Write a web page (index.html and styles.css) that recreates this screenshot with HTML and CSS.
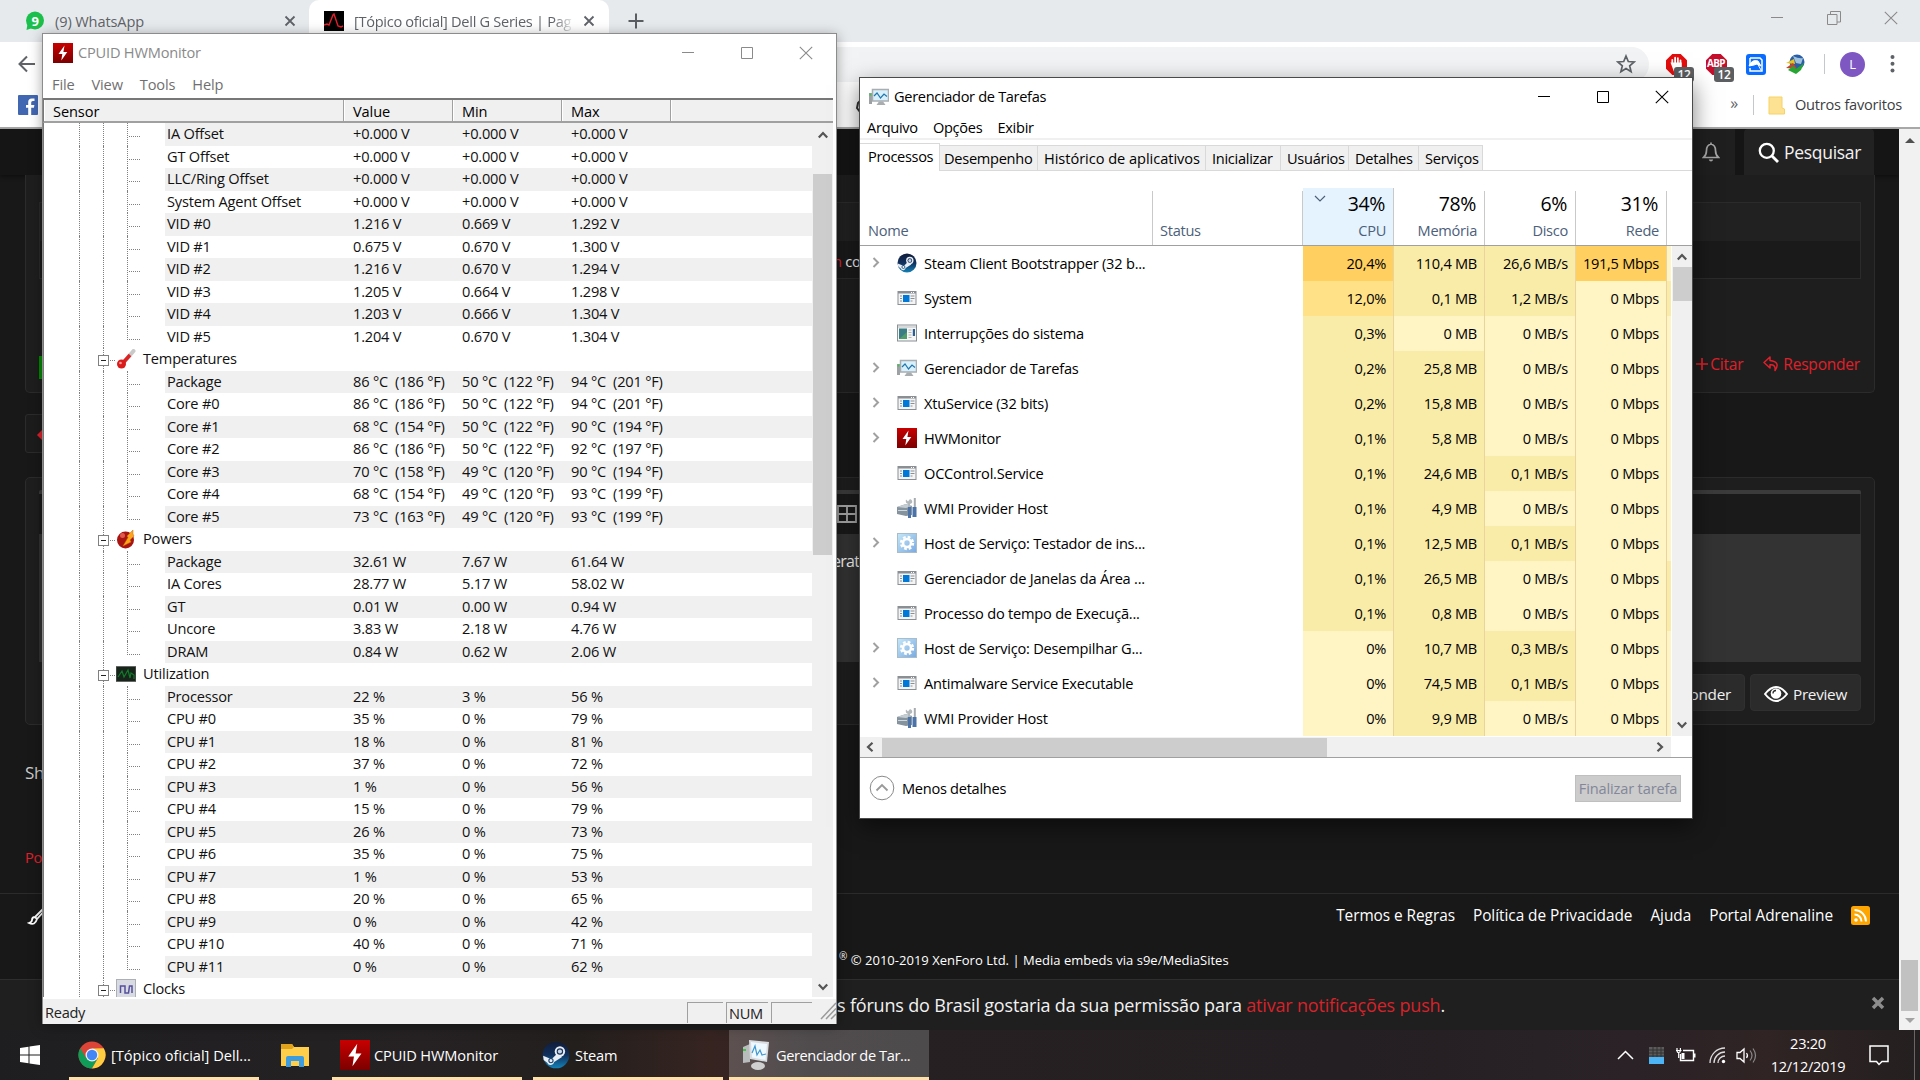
FILE: index.html
```html
<!DOCTYPE html>
<html lang="pt-BR">

<head>
  <meta charset="UTF-8">
  <meta name="viewport" content="width=device-width, initial-scale=1.0">
  <title>Desktop</title>
  <link rel="stylesheet" href="styles.css">
</head>

<body>

  <!-- shared icons -->
  <svg class="defs" width="0" height="0">
    <defs>
      <linearGradient id="redGrad" x1="0" y1="0" x2="0" y2="1"><stop offset="0" stop-color="#c80000"/><stop offset="1" stop-color="#7c0000"/></linearGradient>
      <linearGradient id="steamGrad" x1="0" y1="0" x2="0" y2="1"><stop offset="0" stop-color="#111d3a"/><stop offset=".5" stop-color="#10305c"/><stop offset="1" stop-color="#1483b8"/></linearGradient>
      <linearGradient id="gearGrad" x1="0" y1="0" x2="1" y2="1"><stop offset="0" stop-color="#c5e8f8"/><stop offset="1" stop-color="#79a9e0"/></linearGradient>
    </defs>
    <symbol id="i-bolt" viewBox="0 0 20 20"><rect width="20" height="20" fill="url(#redGrad)"/><path d="M11.5 2.5L5.5 11h3.8l-1 6.5 6-8.5h-3.9z" fill="#fff"/></symbol>
    <symbol id="i-steam" viewBox="0 0 20 20"><circle cx="10" cy="10" r="9.5" fill="url(#steamGrad)"/><path d="M.8 10.5l6 2.6 4.5-4.6 3 3-5.6 3.5a2.6 2.6 0 0 1-5 .5L1.2 13.5z" fill="#e9eef5"/><circle cx="12.8" cy="7.5" r="3.7" fill="#e9eef5"/><circle cx="12.8" cy="7.5" r="2.3" fill="#163057"/><circle cx="12.8" cy="7.5" r="1.5" fill="#c9d6e6"/><circle cx="6.4" cy="14" r="1.5" fill="none" stroke="#1a4570" stroke-width=".8"/></symbol>
    <symbol id="i-app" viewBox="0 0 20 20"><rect x="1" y="3.5" width="18" height="13" fill="#f4f4f4" stroke="#8a8f94"/><path d="M1 4.5h18" stroke="#8a8f94" stroke-width="2"/><path d="M14 4.5h1M16 4.5h1" stroke="#fff"/><rect x="6" y="7" width="6.500" height="7" fill="#0078d7"/><path d="M3 8h2M3 10.500h2M3 13h2M13.500 8h4M13.500 10.500h4M13.500 13h2" stroke="#8a8f94"/></symbol>
    <symbol id="i-sys" viewBox="0 0 20 20"><rect x=".5" y="2" width="19" height="16" fill="#f6f6f6" stroke="#8a8f94"/><path d="M1 4h18" stroke="#b9bdc1"/><rect x="2" y="5.500" width="8" height="10.500" fill="#3a7d84"/><path d="M2 16l8-7v7z" fill="#4f9c6c"/><path d="M11.500 7h3M11.500 9.500h3M11.500 12h3M11.500 14.500h3" stroke="#b5b5b5"/><rect x="15.800" y="6" width="2.200" height="7" fill="#2b5f93"/></symbol>
    <symbol id="i-tm" viewBox="0 0 20 20"><rect y="6" width="3" height="11" fill="#9da1a4"/><path d="M.5 7.500h2" stroke="#3fc34a" stroke-width="2"/><rect x="3.500" y="2.500" width="16" height="11.500" fill="#d8f0fb" stroke="#a9adb0" stroke-width="1.500"/><path d="M5 9l3-3 3.500 5L15 7l3 2.500" fill="none" stroke="#2176ae" stroke-width="1.200"/><path d="M10 14.500h4l2.500 3.500H7.500z" fill="#a9adb0"/></symbol>
    <symbol id="i-wmi" viewBox="0 0 20 20"><path d="M0 9l9-3 6 2v9l-6 1-9-2z" fill="#84939d"/><path d="M0 9l9-3 6 2-6 2z" fill="#c4cdd2"/><path d="M1 12.500h9" stroke="#cfd8dc"/><path d="M9 1.500l2 2 2-2.500q3 1 2 4l-2 1v3h-2V6q-3-1-2-4.500z" fill="#b3b8ba"/><path d="M17.800 0v10" stroke="#a6abad" stroke-width="2"/><path d="M11 9h3v11h-3zM15.500 9h4v10h-4z" fill="#4c73a8"/></symbol>
    <symbol id="i-gear" viewBox="0 0 20 20"><rect x=".5" y=".5" width="19" height="19" fill="url(#gearGrad)" stroke="#a9bccb"/><circle cx="10" cy="10" r="6" fill="none" stroke="#fff" stroke-width="2.400" stroke-dasharray="2.700 2"/><circle cx="10" cy="10" r="4" fill="none" stroke="#fff" stroke-width="2.600"/></symbol>
    <symbol id="i-temp" viewBox="0 0 20 20"><path d="M17.500 2L8 13" stroke="#c9c9c9" stroke-width="4" stroke-linecap="round"/><path d="M14 6l-8 9" stroke="#dc2222" stroke-width="3.500"/><circle cx="5.500" cy="15" r="4.500" fill="#d91c1c"/><circle cx="4.500" cy="14" r="1.300" fill="#ff9b9b"/></symbol>
    <symbol id="i-power" viewBox="0 0 20 20"><ellipse cx="9.500" cy="11" rx="8.500" ry="8.500" fill="#a81412"/><circle cx="6.500" cy="6.500" r="2.500" fill="#e0574c"/><path d="M17 1l-6 6 1 1.500L7 17l8-4-1-2 4-4-1-2z" fill="#ffa51c" stroke="#c46f00" stroke-width=".5"/></symbol>
    <symbol id="i-util" viewBox="0 0 20 20"><rect y="2.500" width="20" height="15" fill="#16241a" stroke="#666"/><path d="M2 13l4-6 2 6 4-7 2 8 1-5 3 2v4" fill="none" stroke="#127a2a" stroke-width="1.200"/></symbol>
    <symbol id="i-clock" viewBox="0 0 20 20"><rect x=".5" y=".5" width="19" height="19" fill="#d9dbe2" stroke="#adafb7"/><path d="M4.500 14V7H9v7h3.500l1-7H16v7" fill="none" stroke="#54509e" stroke-width="1.500"/></symbol>
    <symbol id="i-close" viewBox="0 0 14 14"><path d="M.8.800l12.400 12.400M13.200.800L.800 13.200" stroke="currentColor" stroke-width="1.100"/></symbol>
    <symbol id="i-max" viewBox="0 0 14 14"><path d="M1.500 1.500h11v11h-11z" fill="none" stroke="currentColor"/></symbol>
    <symbol id="i-min" viewBox="0 0 14 14"><path d="M1 6.500h12" stroke="currentColor"/></symbol>
    <symbol id="i-x" viewBox="0 0 12 12"><path d="M1.500 1.500l9 9M10.500 1.500l-9 9" stroke="#5f6368" stroke-width="1.800"/></symbol>
    <symbol id="i-arrow" viewBox="0 0 12 12"><path d="M1.800 8.500L6 4l4.200 4.500" fill="none" stroke="#555" stroke-width="2.200"/></symbol>
  </svg>

  <div class="browser">
    <div class="tabstrip">
      <div class="tab">
        <svg width="20" height="20" viewBox="0 0 20 20"><circle cx="10" cy="9.500" r="9" fill="#1bc04c"/><path d="M1.500 19l1-6 5 4z" fill="#1bc04c"/><text x="6.500" y="14.500" class="wa-num">9</text></svg>
        <span class="tab-title">(9) WhatsApp</span>
        <svg width="12" height="12"><use href="#i-x"/></svg>
      </div>
      <div class="tab tab-active">
        <svg width="20" height="20" viewBox="0 0 20 20"><rect width="20" height="20" fill="#000"/><path d="M0 14l3-1 2 1 4-10 1-1 4 12 3 1 2-1" fill="none" stroke="#e5202c" stroke-width="1.400"/></svg>
        <span class="tab-title tab-fade">[Tópico oficial] Dell G Series | Pag</span>
        <svg width="12" height="12"><use href="#i-x"/></svg>
      </div>
      <svg class="newtab" width="16" height="16" viewBox="0 0 16 16"><path d="M8 .500v15M.500 8h15" stroke="#5a5e62" stroke-width="2"/></svg>
      <div class="browser-btns">
        <svg width="14" height="14"><use href="#i-min"/></svg>
        <svg width="14" height="14" viewBox="0 0 14 14"><path d="M.500 3.500h9.500v10H.500zM3.500 3.500V.500h10v10.500H10" fill="none" stroke="#8a8a8a"/></svg>
        <svg width="14" height="14"><use href="#i-close"/></svg>
      </div>
    </div>

    <div class="toolbar">
      <svg class="back" width="18" height="18" viewBox="0 0 18 18"><path d="M17 9H2M9 1.500L1.500 9 9 16.500" fill="none" stroke="#5f6368" stroke-width="2"/></svg>
      <div class="omnibox">
        <svg width="20" height="20" viewBox="0 0 20 20"><path d="M10 2l2.300 5.500 5.900.500-4.500 3.900 1.400 5.800L10 14.600l-5.100 3.100 1.400-5.800L1.800 8l5.900-.500z" fill="none" stroke="#5f6368" stroke-width="1.700"/></svg>
      </div>
      <div class="ext">
        <svg width="21" height="21" viewBox="0 0 20 20"><path d="M6 0h8l6 6v8l-6 6H6l-6-6V6z" fill="#e40d0d"/><path d="M6 9V5.500M8.700 9V3.500M11.300 9V4M13.800 10V6M5.500 9h8.700v3l-2 4h-4z" fill="#fff" stroke="#fff" stroke-width="1.700" stroke-linecap="round"/></svg>
        <span class="badge">12</span>
      </div>
      <div class="ext">
        <svg width="21" height="21" viewBox="0 0 20 20"><path d="M6 0h8l6 6v8l-6 6H6l-6-6V6z" fill="#c70d2c"/><text x="1" y="12.500" class="abp">ABP</text></svg>
        <span class="badge">12</span>
      </div>
      <svg class="ext-icon" width="20" height="21" viewBox="0 0 20 21"><rect width="20" height="21" rx="3" fill="#0a6cff"/><path d="M4 4h10l2 2v11H4v-3M4 11V4" fill="none" stroke="#fff" stroke-width="1.500"/><path d="M3 12Q6 5 12 7l3 5-4-2-3 1zM11 9l4 7" fill="#fff" stroke="#fff"/></svg>
      <svg class="ext-icon" width="20" height="20" viewBox="0 0 20 20"><circle cx="12" cy="8" r="7.500" fill="#2b5ea8"/><path d="M8 2q6 3 10 2l-2 6-5-1z" fill="#9fc3dc"/><path d="M1 9l8-4 1 5z" fill="#e8c31c"/><path d="M1 14l7-5 4 6z" fill="#c4452c"/><path d="M3 16l5-4 3 3 8-6-3 7-5 4z" fill="#26a532"/></svg>
      <span class="tool-sep"></span>
      <span class="avatar">L</span>
      <svg width="5" height="20" viewBox="0 0 5 20"><circle cx="2.500" cy="3" r="2" fill="#5f6368"/><circle cx="2.500" cy="9.800" r="2" fill="#5f6368"/><circle cx="2.500" cy="16.600" r="2" fill="#5f6368"/></svg>
    </div>

    <div class="bookmarks">
      <svg width="20" height="20" viewBox="0 0 20 20"><rect width="20" height="20" rx="1" fill="#4267b2"/><path d="M16.500 6h-1.800q-1.500 0-1.500 1.500V10h3.200l-.5 2.700h-2.700V20h-3v-7.300H8V10h2.200V7q0-3.600 3.600-3.600h2.700z" fill="#fff"/></svg>
      <svg class="hidden-mark" width="20" height="20" viewBox="0 0 20 20"><path d="M8 3l-5 5-1 5 3 4M9 6l-4 5 3 5" fill="none" stroke="#333" stroke-width="2"/></svg>
      <span class="more-marks">»</span>
      <span class="mark-sep"></span>
      <svg width="17" height="19" viewBox="0 0 17 19"><path d="M1 1h13v11l2.500 1v5H1z" fill="#fde293" stroke="#f6d365"/></svg>
      <span class="mark-label">Outros favoritos</span>
    </div>

    <div class="viewport">
      <div class="page">
        <div class="nav">
          <div class="nav-bell">
            <svg width="18" height="20" viewBox="0 0 18 20"><path d="M9 2q-4.500 1-4.500 6.500Q4.500 13 1.500 15.500h15Q13.500 13 13.500 8.500 13.500 3 9 2zM9 .500v2" fill="none" stroke="#a5a5a5" stroke-width="1.700"/><path d="M6.800 17.500h4.400q-.5 2-2.200 2t-2.200-2z" fill="#a5a5a5"/></svg>
          </div>
          <div class="nav-search">
            <svg width="21" height="21" viewBox="0 0 21 21"><circle cx="8.800" cy="8.800" r="7" fill="none" stroke="#fff" stroke-width="2.300"/><path d="M14 14l6 6" stroke="#fff" stroke-width="2.800"/></svg>
            <span>Pesquisar</span>
          </div>
        </div>

        <div class="post">
          <div class="quote">
            <div class="quote-top"></div>
            <div class="quote-body"><i>n</i> co</div>
          </div>
          <div class="online"></div>
          <div class="post-actions">
            <div class="action">
              <svg width="12" height="14" viewBox="0 0 12 14"><path d="M6 1v12M0 7h12" stroke="#e0202a" stroke-width="1.700"/></svg>
              <span>Citar</span>
            </div>
            <div class="action">
              <svg width="18" height="16" viewBox="0 0 18 16"><path d="M7 1L1 6.500 7 12V8.800q6-.500 5 5.700 6-8.500-5-10z" fill="none" stroke="#e0202a" stroke-width="1.500" stroke-linejoin="round"/></svg>
              <span>Responder</span>
            </div>
          </div>
        </div>

        <div class="pager"><svg width="8" height="12" viewBox="0 0 8 12"><path d="M6 0v12L0 6z" fill="#e0202a"/></svg></div>

        <div class="reply">
          <div class="editor">
            <div class="editor-tools">
              <svg width="20" height="18" viewBox="0 0 20 18"><path d="M1 1h18v16H1zM10 1v16M1 9h18" fill="none" stroke="#a5a5a5" stroke-width="1.800"/></svg>
            </div>
            <div class="editor-text">erat</div>
          </div>
          <div class="reply-btns">
            <span class="btn">Responder</span>
            <span class="btn"><svg width="24" height="16" viewBox="0 0 24 16"><path d="M1 8q11-14 22 0-11 14-22 0z" fill="none" stroke="#fff" stroke-width="2"/><circle cx="12" cy="7.500" r="5.300" fill="#fff"/><path d="M9 7.500a3 3 0 0 1 3-3" fill="none" stroke="#2b2b2b" stroke-width="1.300"/></svg>Preview</span>
          </div>
        </div>

        <div class="share">Sh</div>
        <div class="crumb">Po</div>

        <div class="footer">
          <div class="footer-row">
            <svg width="20" height="20" viewBox="0 0 20 20"><path d="M18 1L8 11l2 2 9-10zM8 11q-3 0-3 3 0 2-3 3 6 3 8-4z" fill="none" stroke="#fff" stroke-width="1.800"/></svg>
            <div class="footer-links">
              <a>Termos e Regras</a><a>Política de Privacidade</a><a>Ajuda</a><a>Portal Adrenaline</a>
              <svg width="19" height="19" viewBox="0 0 19 19"><rect width="19" height="19" rx="2.500" fill="#ffa500"/><circle cx="5" cy="14" r="1.800" fill="#fff"/><path d="M3.500 8.500a7 7 0 0 1 7 7M3.500 4a11.500 11.500 0 0 1 11.500 11.500" fill="none" stroke="#fff" stroke-width="2"/></svg>
            </div>
          </div>
          <div class="copyright"><sup>®</sup> © 2010-2019 XenForo Ltd. | Media embeds via s9e/MediaSites</div>
        </div>

        <div class="notice">
          <span class="notice-text">s fóruns do Brasil gostaria da sua permissão para <em>ativar notificações push</em>.</span>
          <svg width="14" height="14" viewBox="0 0 14 14"><path d="M2 2l10 10M12 2L2 12" stroke="#8d8d8d" stroke-width="3.500"/></svg>
        </div>
      </div>
      <div class="page-scroll">
        <span class="tri-up"></span>
        <span class="page-thumb"></span>
        <span class="tri-down"></span>
      </div>
    </div>
  </div>

  <!-- HWMonitor -->
  <div class="window hw">
    <div class="titlebar">
      <svg width="20" height="20"><use href="#i-bolt"/></svg>
      <span>CPUID HWMonitor</span>
      <div class="win-btns">
        <svg width="14" height="14"><use href="#i-min"/></svg>
        <svg width="14" height="14"><use href="#i-max"/></svg>
        <svg width="14" height="14"><use href="#i-close"/></svg>
      </div>
    </div>
    <div class="hw-menu"><span>File</span><span>View</span><span>Tools</span><span>Help</span></div>
    <div class="hw-head"><span>Sensor</span><span>Value</span><span>Min</span><span>Max</span><span></span></div>
    <div class="hw-body">
      <div id="sensors" class="hw-list"></div>
      <div class="hw-scroll">
        <svg width="12" height="12"><use href="#i-arrow"/></svg>
        <span class="hw-thumb"></span>
        <svg class="down" width="12" height="12"><use href="#i-arrow"/></svg>
      </div>
    </div>
    <div class="hw-status">
      <span class="ready">Ready</span>
      <span class="pane"></span><span class="pane pane-num">NUM</span><span class="pane pane-last"></span>
      <svg width="16" height="18" viewBox="0 0 16 18"><path d="M1 17L16 1M6 17L16 6.500M11 17l5-5" stroke="#9a9a9a" stroke-width="1.500"/></svg>
    </div>
  </div>

  <!-- Task manager -->
  <div class="window tm">
    <div class="titlebar">
      <svg width="20" height="20"><use href="#i-tm"/></svg>
      <span>Gerenciador de Tarefas</span>
      <div class="win-btns">
        <svg width="14" height="14"><use href="#i-min"/></svg>
        <svg width="14" height="14"><use href="#i-max"/></svg>
        <svg width="14" height="14"><use href="#i-close"/></svg>
      </div>
    </div>
    <div class="tm-menu"><span>Arquivo</span><span>Opções</span><span>Exibir</span></div>
    <div class="tm-tabs">
      <span class="tm-tab active">Processos</span>
      <span class="tm-tab t2">Desempenho</span>
      <span class="tm-tab t3">Histórico de aplicativos</span>
      <span class="tm-tab t4">Inicializar</span>
      <span class="tm-tab t5">Usuários</span>
      <span class="tm-tab t6">Detalhes</span>
      <span class="tm-tab t7">Serviços</span>
      <span class="tm-tab-rest"></span>
    </div>
    <div class="tm-head">
      <div class="col-name"><small>Nome</small></div>
      <div class="col-status"><small>Status</small></div>
      <div class="col-num sorted">
        <svg class="sort" width="12" height="8" viewBox="0 0 12 8"><path d="M1 1l5 5 5-5" fill="none" stroke="#4c607a" stroke-width="1.200"/></svg>
        <b>34%</b><small>CPU</small>
      </div>
      <div class="col-num"><b>78%</b><small>Memória</small></div>
      <div class="col-num"><b>6%</b><small>Disco</small></div>
      <div class="col-num"><b>31%</b><small>Rede</small></div>
    </div>
    <div class="tm-body">
      <div id="procs" class="tm-list"></div>
      <div class="tm-scroll">
        <svg width="12" height="12"><use href="#i-arrow"/></svg>
        <span class="tm-thumb"></span>
        <svg class="down" width="12" height="12"><use href="#i-arrow"/></svg>
      </div>
    </div>
    <div class="tm-hscroll">
      <svg class="left" width="12" height="12"><use href="#i-arrow"/></svg>
      <span class="tm-hthumb"></span>
      <svg class="right" width="12" height="12"><use href="#i-arrow"/></svg>
    </div>
    <div class="tm-foot">
      <svg width="26" height="26" viewBox="0 0 26 26"><circle cx="13" cy="13" r="11.800" fill="none" stroke="#8a8a8a"/><path d="M7.500 15.500L13 10l5.500 5.500" fill="none" stroke="#999" stroke-width="1.800"/></svg>
      <span>Menos detalhes</span>
      <button class="end-task" disabled>Finalizar tarefa</button>
    </div>
  </div>

  <div class="taskbar">
    <div class="start">
      <svg width="20" height="20" viewBox="0 0 20 20"><path d="M0 3l8.500-1.200v7.700H0zM9.500 1.600L20 0v9.500H9.500zM0 10.500h8.500v7.700L0 17zM9.500 10.500H20V20L9.500 18.500z" fill="#fff"/></svg>
    </div>
    <div class="task open">
      <svg width="28" height="28" viewBox="0 0 28 28"><circle cx="14" cy="14" r="13.500" fill="#db4437"/><path d="M2.300 7.250A13.500 13.500 0 0 0 14 27.500L19.800 17.300 14 14 8.200 17.300z" fill="#0f9d58"/><path d="M25.700 7.250A13.500 13.500 0 0 1 14 27.500L19.850 17.400 14 7.500z" fill="#ffcd40"/><circle cx="14" cy="14" r="6.500" fill="#f1f1f1"/><circle cx="14" cy="14" r="5.200" fill="#4285f4"/></svg>
      <span>[Tópico oficial] Dell...</span>
    </div>
    <div class="task explorer">
      <svg width="28" height="24" viewBox="0 0 28 24"><path d="M0 1h11l2 3h15v19H0z" fill="#ffcf4b"/><path d="M0 1h11l2 3-2 2H0z" fill="#e0a21c"/><path d="M5 24v-9q0-2 2-2h14q2 0 2 2v9h-5v-6h-8v6z" fill="#3d9be0"/></svg>
    </div>
    <div class="task open t-hw"><svg width="30" height="30"><use href="#i-bolt"/></svg><span>CPUID HWMonitor</span></div>
    <div class="task open t-steam"><svg width="28" height="28"><use href="#i-steam"/></svg><span>Steam</span></div>
    <div class="task open t-tm">
      <svg width="28" height="32" viewBox="0 0 28 32"><path d="M1 8l7-3v18l-7 1z" fill="#b9bcbd"/><path d="M1 11h3" stroke="#3fc34a" stroke-width="2"/><path d="M7 1l20 2-2 20L8 20z" fill="#d9dcde"/><path d="M9 3l16 2-1.500 16L10 18.500z" fill="#eef8ff"/><path d="M10 14l3-7 2 9 3-5 2 5 4-1" fill="none" stroke="#3f97cf" stroke-width="1.200"/><ellipse cx="16" cy="27" rx="7" ry="4" fill="#cfcfcf"/></svg>
      <span>Gerenciador de Tar...</span>
    </div>
    <div class="tray">
      <svg width="17" height="10" viewBox="0 0 17 10"><path d="M1 9l7.500-7.500L16 9" fill="none" stroke="#fff" stroke-width="1.500"/></svg>
      <svg class="tr-disk" width="15" height="17" viewBox="0 0 15 17"><rect width="15" height="17" fill="#5b5b5b"/><path d="M0 3h15M0 6h15M0 9h15M4 0v11M8 0v11M12 0v11" stroke="#333"/><rect y="10" width="15" height="7" fill="#4db5f5"/></svg>
      <svg class="tr-bat" width="20" height="16" viewBox="0 0 20 16"><path d="M4.500 7v6.500h13V3.500H7M18.800 6.500v4" fill="none" stroke="#fff" stroke-width="1.400"/><path d="M5.500 6h3v6h-3z" fill="#fff"/><path d="M1 1v2.500q0 2 1.700 2t1.700-2V1M0 3.500h5.500M2.700 5v6" fill="none" stroke="#fff" stroke-width="1.200"/></svg>
      <svg class="tr-wifi" width="17" height="17" viewBox="0 0 17 17"><path d="M1 16A15 15 0 0 1 16 1M5 16A11 11 0 0 1 16 5M9 16a7 7 0 0 1 7-7" fill="none" stroke="#ddd" stroke-width="1.300"/><circle cx="14.500" cy="14.500" r="1.700" fill="#fff"/></svg>
      <svg class="tr-snd" width="21" height="17" viewBox="0 0 21 17"><path d="M1 5.500h3L8 2v13l-4-3.500H1z" fill="none" stroke="#fff" stroke-width="1.300"/><path d="M10.500 6q2 2.500 0 5" fill="none" stroke="#fff" stroke-width="1.200"/><path d="M14 3.500q4 5 0 10M17 1.500q5 7 0 14" fill="none" stroke="#888" stroke-width="1.200"/></svg>
      <div class="clock"><span>23:20</span><span>12/12/2019</span></div>
      <svg class="tr-note" width="20" height="21" viewBox="0 0 20 21"><path d="M1 1h18v15.500h-6L10 19.500 7.500 16.500H1z" fill="none" stroke="#fff" stroke-width="1.500"/></svg>
      <span class="peek"></span>
    </div>
  </div>

  <script src="script.js"></script>
</body>

</html>
```
FILE: styles.css
```css
* {
  box-sizing: border-box;
}

body,
html {
  height: 1080px;
  margin: 0;
  overflow: hidden;
  font-family: "Open Sans", "Noto Sans", sans-serif;
  font-size: 14.6px;
  letter-spacing: -0.28px;
  line-height: 20px;
  background-color: #181818;
}

svg {
  display: block;
  flex: none;
}

span {
  white-space: pre;
}

.defs {
  position: absolute;
}

/* ---------- browser ---------- */
.browser {
  width: 1920px;
  height: 1030px;
  display: flex;
  flex-direction: column;
}

.tabstrip {
  display: flex;
  height: 42px;
  background-color: #e7eaed;
  color: #5f6368;
}

.tab {
  display: flex;
  align-items: center;
  width: 309px;
  padding: 0 13px 0 25px;
}

.tab-title {
  flex: 1;
  margin-left: 10px;
  padding-bottom: 1px;
  letter-spacing: -0.12px;
}

.tab-active {
  width: 300px;
  padding: 0 14px 0 15px;
  background-color: #fff;
  border-radius: 10px 10px 0 0;
}

.tab-fade {
  margin-left: 10px;
  margin-right: 8px;
  letter-spacing: -0.3px;
  -webkit-mask-image: linear-gradient(to right, #000 90%, transparent);
}

.wa-num {
  fill: #fff;
  font-size: 13px;
  font-weight: 700;
}

.newtab {
  margin: 13px 0 0 19px;
}

.browser-btns {
  display: flex;
  gap: 43px;
  margin: 11px 22px 0 auto;
  color: #8a8a8a;
}

.toolbar {
  display: flex;
  align-items: center;
  height: 44px;
  background-color: #fff;
  padding: 0 25px 0 18px;
}

.omnibox {
  flex: 1;
  height: 35px;
  margin-left: 20px;
  margin-right: 17px;
  border-radius: 18px;
  background-color: #f1f3f4;
  display: flex;
  justify-content: flex-end;
  align-items: center;
  padding-right: 13px;
}

.ext {
  position: relative;
  margin-right: 19px;
}

.badge {
  position: absolute;
  left: 8px;
  top: 13px;
  width: 20px;
  height: 15px;
  border-radius: 3px;
  background-color: #5c5f62;
  color: #fff;
  font-size: 12px;
  font-weight: 600;
  line-height: 15px;
  text-align: center;
}

.abp {
  fill: #fff;
  font-size: 9.5px;
  font-weight: 700;
  letter-spacing: -0.6px;
}

.ext-icon {
  margin-right: 19px;
}

.tool-sep,
.mark-sep {
  width: 1px;
  height: 20px;
  background-color: #c5c8cb;
}

.tool-sep {
  margin-right: 15px;
}

.avatar {
  width: 25px;
  height: 25px;
  margin-right: 25px;
  border-radius: 50%;
  background-color: #7e57c2;
  color: #fff;
  font-size: 13px;
  line-height: 25px;
  text-align: center;
}

.bookmarks {
  display: flex;
  align-items: center;
  height: 43px;
  padding: 0 18px 3px;
  background-color: #fff;
  border-bottom: 2px solid #a8a8a8;
  color: #3c4043;
}

.hidden-mark {
  margin-left: 817px;
}

.more-marks {
  margin-left: auto;
  margin-right: 15px;
  padding-bottom: 4px;
  font-size: 16px;
  color: #5f6368;
}

.mark-sep {
  margin-right: 14px;
}

.mark-label {
  margin-left: 10px;
  padding-bottom: 2px;
  letter-spacing: -0.23px;
}

.viewport {
  display: flex;
  flex: 1;
}

.page {
  width: 1899px;
  color: #f2f2f2;
}

.page-scroll {
  width: 21px;
  height: 901px;
  background-color: #f1f1f1;
  display: flex;
  flex-direction: column;
  align-items: center;
}

.tri-up,
.tri-down {
  border-left: 5px solid transparent;
  border-right: 5px solid transparent;
}

.tri-up {
  margin-top: 9px;
  border-bottom: 5px solid #505050;
}

.tri-down {
  margin-top: 7px;
  border-top: 5px solid #a3a3a3;
}

.page-thumb {
  width: 17px;
  height: 51px;
  margin-top: 817px;
  background-color: #c1c1c1;
}

.nav {
  display: flex;
  justify-content: flex-end;
  gap: 9px;
  height: 46px;
  padding-right: 25px;
  background-color: #151515;
  box-shadow: 0 2px 4px rgba(0, 0, 0, 0.4);
}

.nav-bell,
.nav-search {
  display: flex;
  align-items: center;
  background-color: #1f1f1f;
}

.nav-bell {
  width: 60px;
  padding-left: 27px;
}

.nav-search {
  width: 130px;
  padding-left: 14px;
  gap: 5px;
  background-color: #222;
  border-radius: 4px 4px 0 0;
  font-size: 17.5px;
  letter-spacing: -0.3px;
}

.post {
  height: 218px;
  margin: 0 24px 0 25px;
  padding: 27px 13px 0;
  background-color: #1e1e1e;
  border: 1px solid #2b2b2b;
  border-top: none;
  border-radius: 0 0 5px 5px;
}

.quote {
  height: 77px;
  border: 1px solid #2b2b2b;
}

.quote-top {
  height: 38px;
  background-color: #212121;
}

.quote-body {
  height: 37px;
  padding: 10px 0 0 793px;
  background-color: #1a1a1a;
}

.quote-body i {
  color: #e0202a;
  font-style: normal;
}

.online {
  width: 10px;
  height: 23px;
  margin-top: 77px;
  background-color: #008a00;
}

.post-actions {
  display: flex;
  justify-content: flex-end;
  gap: 20px;
  margin-top: -25px;
  padding-right: 1px;
  color: #e0202a;
  font-size: 15.5px;
}

.action {
  display: flex;
  align-items: center;
  gap: 2px;
  letter-spacing: -0.2px;
}

.pager {
  width: 80px;
  height: 39px;
  margin: 21px 0 24px 25px;
  padding: 14px 11px;
  background-color: #1c1c1c;
  border: 1px solid #2b2b2b;
  border-radius: 3px;
}

.reply {
  height: 248px;
  margin: 0 24px 0 25px;
  padding: 12px 13px 0;
  background-color: #1e1e1e;
  border: 1px solid #2b2b2b;
  border-radius: 5px;
}

.editor {
  height: 172px;
  border-top: 4px solid #3b3b3b;
  border-radius: 2px;
}

.editor-tools {
  height: 40px;
  padding: 11px 0 0 798px;
  background-color: #1a1a1a;
  border-right: 1px solid #2b2b2b;
}

.editor-text {
  height: 128px;
  padding: 17px 0 0 793px;
  background-color: #333;
  font-size: 16px;
  letter-spacing: -0.7px;
}

.reply-btns {
  display: flex;
  justify-content: flex-end;
  gap: 5px;
  margin-top: 12px;
}

.btn {
  display: flex;
  align-items: center;
  gap: 5px;
  height: 37px;
  padding: 2px 13px 0;
  background-color: #2b2b2b;
  border: 1px solid #303030;
  border-radius: 4px;
  font-size: 15.3px;
}

.share {
  height: 96px;
  padding: 38px 25px 0;
  color: #ccc;
  font-size: 17px;
}

.crumb {
  height: 72px;
  padding: 26px 25px 0;
  color: #e0202a;
}

.footer {
  height: 86px;
  border-top: 1px solid #2b2b2b;
  color: #fff;
}

.footer-row {
  display: flex;
  justify-content: space-between;
  align-items: center;
  height: 43px;
  padding: 0 29px 0 27px;
}

.footer-links {
  display: flex;
  align-items: center;
  gap: 18px;
  font-size: 15.4px;
  letter-spacing: -0.05px;
}

.copyright {
  padding-left: 839px;
  margin-top: 13px;
  font-size: 13px;
  letter-spacing: 0.02px;
  color: #fff;
}

.copyright sup {
  font-size: 10px;
  line-height: 0;
}

.notice {
  display: flex;
  align-items: center;
  justify-content: space-between;
  height: 51px;
  padding: 0 14px 4px 837px;
  background-color: #1f1f1f;
  border-top: 1px solid #2e2e2e;
  font-size: 18px;
  letter-spacing: -0.18px;
}

.notice-text {
  padding-top: 4px;
}

.notice em {
  font-style: normal;
  color: #d6222a;
}

/* ---------- windows ---------- */
.window {
  position: absolute;
  display: flex;
  flex-direction: column;
  background-color: #fff;
  overflow: hidden;
}

.titlebar {
  display: flex;
  align-items: center;
  height: 38px;
  padding: 0 23px 0 9px;
}

.titlebar > span {
  margin-left: 5px;
  padding-bottom: 2px;
}

.win-btns {
  display: flex;
  gap: 45px;
  margin-left: auto;
  padding-bottom: 1px;
}

/* ---------- HWMonitor ---------- */
.hw {
  left: 42px;
  top: 33px;
  width: 795px;
  height: 991px;
  border: 1px solid #8c8c8c;
  border-bottom: none;
  box-shadow: 0 2px 12px rgba(0, 0, 0, 0.35);
}

.hw .titlebar {
  padding-left: 10px;
  color: #8a8a8a;
  letter-spacing: -0.2px;
}

.hw-menu {
  display: flex;
  gap: 17px;
  height: 26px;
  padding: 2px 9px;
  color: #6f6f6f;
  letter-spacing: -0.15px;
}

.hw-head {
  display: flex;
  height: 25px;
  margin-right: 3px;
  border-top: 2px solid #777;
  border-left: 1px solid #777;
  border-bottom: 2px solid #a0a0a0;
  background-color: #f0f0f0;
  line-height: 22px;
  letter-spacing: -0.1px;
}

.hw-head span {
  width: 109px;
  padding-left: 8px;
  border-right: 1px solid #a0a0a0;
  border-left: 1px solid #fff;
}

.hw-head span:first-child {
  width: 300px;
}

.hw-head span:last-child {
  flex: 1;
  border-right: none;
}

.hw-body {
  display: flex;
  height: 874px;
  padding-right: 3px;
  overflow: hidden;
}

.hw-list {
  width: 769px;
  border-left: 1px solid #777;
}

.hw-row {
  display: flex;
  height: 22.5px;
  line-height: 21px;
  letter-spacing: -0.2px;
  color: #111;
}

.hw-row svg {
  margin-top: 1px;
}

.guide {
  width: 24px;
  border-right: 1px dotted #808080;
}

.guide-root {
  width: 36px;
}

.guide-last {
  height: 14px;
}

.branch,
.stub {
  width: 13px;
  height: 14px;
  background: repeating-linear-gradient(to right, transparent 0 1px, #808080 1px 2px) bottom / 100% 1px no-repeat;
}

.hw-cells {
  display: flex;
  flex: 1;
  margin-left: 24px;
  padding-left: 2px;
}

.hw-cells.shade {
  background-color: #f0f0f0;
}

.hw-cells span {
  width: 109px;
}

.hw-cells span:first-child {
  width: 186px;
}

.toggle {
  width: 11px;
  height: 11px;
  margin: 7px 0 0 -6px;
  border: 1px solid #808080;
  background: linear-gradient(#222, #222) center / 5px 1px no-repeat #fff;
}

.stub {
  width: 7px;
  height: 13px;
}

.cat-name {
  margin-left: 7px;
}

.hw-scroll,
.tm-scroll {
  display: flex;
  flex-direction: column;
  align-items: center;
  width: 21px;
  background-color: #f0f0f0;
}

.hw-scroll {
  padding: 6px 0 4px;
}

.hw-thumb {
  width: 19px;
  height: 381px;
  margin: 33px 0 auto;
  background-color: #cdcdcd;
}

.down {
  transform: rotate(180deg);
}

.hw-status {
  display: flex;
  height: 27px;
  padding: 3px 0 0 2px;
  background-color: #f0f0f0;
  border-top: 2px solid #fff;
  color: #222;
}

.ready {
  width: 642px;
}

.pane {
  width: 36px;
  height: 21px;
  margin-right: 3px;
  border-top: 1px solid #a0a0a0;
  border-left: 1px solid #a0a0a0;
}

.pane-num {
  width: 42px;
  padding-left: 2px;
}

.pane-last {
  width: 41px;
  margin-right: 8px;
}

/* ---------- task manager ---------- */
.tm {
  left: 859px;
  top: 77px;
  width: 834px;
  height: 742px;
  border: 1px solid #4a4a4a;
  box-shadow: 0 8px 22px rgba(0, 0, 0, 0.5);
  color: #000;
}

.tm .titlebar {
  letter-spacing: -0.33px;
}

.tm-menu {
  display: flex;
  gap: 15px;
  height: 24px;
  padding: 1px 7px;
  border-bottom: 2px solid #f0f0f0;
}

.tm-tabs {
  display: flex;
  align-items: flex-end;
  height: 31px;
}

.tm-tab {
  height: 26px;
  padding: 2px 0 0 4px;
  background-color: #f0f0f0;
  border: 1px solid #d9d9d9;
  border-left: none;
}

.tm-tab.active {
  width: 80px;
  height: 28px;
  padding-left: 8px;
  background-color: #fff;
  border-bottom: none;
  letter-spacing: -0.35px;
}

.t2 {
  width: 98px;
}

.t3 {
  width: 168px;
  padding-left: 6px;
  letter-spacing: -0.04px;
}

.t4 {
  width: 75px;
  padding-left: 6px;
}

.t5 {
  width: 68px;
  padding-left: 6px;
}

.t6 {
  width: 70px;
  padding-left: 6px;
}

.t7 {
  width: 64px;
  padding-left: 6px;
}

.tm-tab-rest {
  flex: 1;
  height: 1px;
  background-color: #d9d9d9;
}

.tm-head {
  display: flex;
  align-items: flex-end;
  height: 75px;
  border-bottom: 1px solid #a0a0a0;
  color: #4c607a;
}

.tm-head small {
  display: block;
  font-size: 14.6px;
  line-height: 20px;
}

.tm-head b {
  display: block;
  margin-right: 1px;
  color: #000;
  font-size: 19.5px;
  font-weight: 400;
  letter-spacing: -0.4px;
  line-height: 25px;
}

.col-name,
.col-status {
  height: 54px;
  padding: 29px 0 0 8px;
  border-right: 1px solid #c9c9c9;
}

.col-name {
  width: 293px;
}

.col-status {
  width: 150px;
  padding-left: 7px;
}

.col-num {
  width: 91px;
  height: 54px;
  padding: 0 7px 0 0;
  border-right: 1px solid #c9c9c9;
  text-align: right;
}

.col-num small {
  margin-top: 4px;
}

.col-num.sorted {
  position: relative;
  height: 57px;
  padding-top: 3px;
  background-color: #e5f3ff;
}

.sort {
  position: absolute;
  left: 11px;
  top: 7px;
}

.tm-body {
  display: flex;
  height: 490px;
}

.tm-list {
  width: 811px;
}

.proc {
  display: flex;
  height: 35px;
  line-height: 35px;
}

.chev {
  width: 37px;
  padding: 11px 0 0 12px;
}

.proc-icon {
  width: 20px;
  padding-top: 7px;
}

.proc-name {
  width: 386px;
  margin-left: 7px;
  letter-spacing: -0.22px;
}

.cell {
  width: 91px;
  padding-right: 7px;
  border-right: 1px solid #ead39c;
  text-align: right;
  background-color: #f9eca8;
}

.proc-name + .cell {
  margin-left: -7px;
  width: 91px;
}

.cell.c0 {
  background-color: #fff4c4;
}

.cell.c2 {
  background-color: #ffe287;
}

.cell.c3 {
  background-color: #ffcf60;
}

.sliver {
  flex: 1;
  background-color: #fff4c4;
}

.sliver.on {
  background-color: #f9eca8;
}

.tm-scroll {
  padding: 5px 0;
  margin-left: 1px;
  width: 20px;
}

.tm-thumb {
  width: 19px;
  height: 34px;
  margin: 4px 0 auto;
  background-color: #cdcdcd;
}

.tm-hscroll {
  display: flex;
  align-items: center;
  height: 20px;
  margin: 1px 21px 0 0;
  padding: 0 5px 0 4px;
  background-color: #f0f0f0;
}

.left {
  transform: rotate(-90deg);
}

.right {
  margin-left: auto;
  transform: rotate(90deg);
}

.tm-hthumb {
  width: 445px;
  height: 19px;
  margin-left: 6px;
  background-color: #cdcdcd;
}

.tm-foot {
  display: flex;
  align-items: center;
  flex: 1;
  padding: 0 11px 0 9px;
  border-top: 1px solid #a0a0a0;
}

.tm-foot span {
  margin-left: 7px;
}

.end-task {
  width: 106px;
  height: 27px;
  margin-left: auto;
  padding: 0 0 1px;
  background-color: #ccc;
  border: 1px solid #bfbfbf;
  color: #838799;
  font: inherit;
  letter-spacing: -0.15px;
}

/* ---------- taskbar ---------- */
.taskbar {
  display: flex;
  height: 50px;
  background: linear-gradient(to right, #1e1e20, #262224 22%, #231f1d 30%, #362421 37%, #262022 46%, #241f22 70%, #2a2227 85%, #302424 92%, #241f20);
  color: #fff;
}

.start {
  width: 69px;
  padding: 15px 20px;
}

.task {
  display: flex;
  align-items: center;
  width: 190px;
  padding-left: 9px;
}

.task span {
  margin-left: 5px;
}

.open {
  border-bottom: 3px solid #fde0a8;
  padding-top: 3px;
  letter-spacing: 0;
}

.explorer {
  width: 73px;
  padding-left: 22px;
}

.t-hw {
  padding-left: 8px;
  letter-spacing: -0.12px;
}

.t-hw span {
  margin-left: 4px;
}

.t-steam {
  margin-left: 11px;
  letter-spacing: -0.12px;
}

.t-tm {
  width: 200px;
  margin-left: 6px;
  padding-left: 13px;
  letter-spacing: -0.4px;
  background: linear-gradient(to right, #5d5150, #504c4e 40%, #4e4b4d);
}

.t-tm span {
  margin-left: 6px;
}

.tray {
  display: flex;
  align-items: center;
  margin-left: auto;
}

.tr-disk {
  margin-left: 15px;
}

.tr-bat {
  margin-left: 12px;
}

.tr-wifi {
  margin-left: 13px;
}

.tr-snd {
  margin-left: 10px;
}

.clock {
  display: flex;
  flex-direction: column;
  align-items: center;
  width: 76px;
  margin-left: 13px;
  line-height: 23px;
}

.tr-note {
  margin-left: 23px;
}

.peek {
  width: 1px;
  height: 50px;
  margin-left: 25px;
  margin-right: 5px;
  background-color: #6b6566;
}
```
FILE: script.js
```js
const groups = [
  { rows: [
    ["IA Offset", "+0.000 V", "+0.000 V", "+0.000 V"],
    ["GT Offset", "+0.000 V", "+0.000 V", "+0.000 V"],
    ["LLC/Ring Offset", "+0.000 V", "+0.000 V", "+0.000 V"],
    ["System Agent Offset", "+0.000 V", "+0.000 V", "+0.000 V"],
    ["VID #0", "1.216 V", "0.669 V", "1.292 V"],
    ["VID #1", "0.675 V", "0.670 V", "1.300 V"],
    ["VID #2", "1.216 V", "0.670 V", "1.294 V"],
    ["VID #3", "1.205 V", "0.664 V", "1.298 V"],
    ["VID #4", "1.203 V", "0.666 V", "1.304 V"],
    ["VID #5", "1.204 V", "0.670 V", "1.304 V"]
  ] },
  { name: "Temperatures", icon: "temp", rows: [
    ["Package", "86 °C  (186 °F)", "50 °C  (122 °F)", "94 °C  (201 °F)"],
    ["Core #0", "86 °C  (186 °F)", "50 °C  (122 °F)", "94 °C  (201 °F)"],
    ["Core #1", "68 °C  (154 °F)", "50 °C  (122 °F)", "90 °C  (194 °F)"],
    ["Core #2", "86 °C  (186 °F)", "50 °C  (122 °F)", "92 °C  (197 °F)"],
    ["Core #3", "70 °C  (158 °F)", "49 °C  (120 °F)", "90 °C  (194 °F)"],
    ["Core #4", "68 °C  (154 °F)", "49 °C  (120 °F)", "93 °C  (199 °F)"],
    ["Core #5", "73 °C  (163 °F)", "49 °C  (120 °F)", "93 °C  (199 °F)"]
  ] },
  { name: "Powers", icon: "power", rows: [
    ["Package", "32.61 W", "7.67 W", "61.64 W"],
    ["IA Cores", "28.77 W", "5.17 W", "58.02 W"],
    ["GT", "0.01 W", "0.00 W", "0.94 W"],
    ["Uncore", "3.83 W", "2.18 W", "4.76 W"],
    ["DRAM", "0.84 W", "0.62 W", "2.06 W"]
  ] },
  { name: "Utilization", icon: "util", rows: [
    ["Processor", "22 %", "3 %", "56 %"],
    ["CPU #0", "35 %", "0 %", "79 %"],
    ["CPU #1", "18 %", "0 %", "81 %"],
    ["CPU #2", "37 %", "0 %", "72 %"],
    ["CPU #3", "1 %", "0 %", "56 %"],
    ["CPU #4", "15 %", "0 %", "79 %"],
    ["CPU #5", "26 %", "0 %", "73 %"],
    ["CPU #6", "35 %", "0 %", "75 %"],
    ["CPU #7", "1 %", "0 %", "53 %"],
    ["CPU #8", "20 %", "0 %", "65 %"],
    ["CPU #9", "0 %", "0 %", "42 %"],
    ["CPU #10", "40 %", "0 %", "71 %"],
    ["CPU #11", "0 %", "0 %", "62 %"]
  ] },
  { name: "Clocks", icon: "clock", rows: [] }
];

let sensorHtml = "";
groups.forEach(group => {
  if (group.name) {
    sensorHtml += `<div class="hw-row"><span class="guide guide-root"></span><span class="guide"></span><span class="toggle"></span><span class="stub"></span><svg width="20" height="20"><use href="#i-${group.icon}"/></svg><span class="cat-name">${group.name}</span></div>`;
  }
  group.rows.forEach((row, i) => {
    const last = i === group.rows.length - 1 ? " guide-last" : "";
    const shade = i % 2 === 0 ? " shade" : "";
    sensorHtml += `<div class="hw-row"><span class="guide guide-root"></span><span class="guide"></span><span class="guide${last}"></span><span class="branch"></span><div class="hw-cells${shade}">${row.map(c => `<span>${c}</span>`).join("")}</div></div>`;
  });
});
document.getElementById("sensors").innerHTML = sensorHtml;

// expandable, icon, name, cpu, memory, disk, network, heat level of each cell
const procs = [
  [1, "steam", "Steam Client Bootstrapper (32 b...", "20,4%", "110,4 MB", "26,6 MB/s", "191,5 Mbps", "31130"],
  [0, "app", "System", "12,0%", "0,1 MB", "1,2 MB/s", "0 Mbps", "21101"],
  [0, "sys", "Interrupções do sistema", "0,3%", "0 MB", "0 MB/s", "0 Mbps", "10000"],
  [1, "tm", "Gerenciador de Tarefas", "0,2%", "25,8 MB", "0 MB/s", "0 Mbps", "11000"],
  [1, "app", "XtuService (32 bits)", "0,2%", "15,8 MB", "0 MB/s", "0 Mbps", "11000"],
  [1, "bolt", "HWMonitor", "0,1%", "5,8 MB", "0 MB/s", "0 Mbps", "11000"],
  [0, "app", "OCControl.Service", "0,1%", "24,6 MB", "0,1 MB/s", "0 Mbps", "11100"],
  [0, "wmi", "WMI Provider Host", "0,1%", "4,9 MB", "0 MB/s", "0 Mbps", "11000"],
  [1, "gear", "Host de Serviço: Testador de ins...", "0,1%", "12,5 MB", "0,1 MB/s", "0 Mbps", "11100"],
  [0, "app", "Gerenciador de Janelas da Área ...", "0,1%", "26,5 MB", "0 MB/s", "0 Mbps", "11001"],
  [0, "app", "Processo do tempo de Execuçã...", "0,1%", "0,8 MB", "0 MB/s", "0 Mbps", "11001"],
  [1, "gear", "Host de Serviço: Desempilhar G...", "0%", "10,7 MB", "0,3 MB/s", "0 Mbps", "01100"],
  [1, "app", "Antimalware Service Executable", "0%", "74,5 MB", "0,1 MB/s", "0 Mbps", "01100"],
  [0, "wmi", "WMI Provider Host", "0%", "9,9 MB", "0 MB/s", "0 Mbps", "01000"]
];

document.getElementById("procs").innerHTML = procs.map(p => {
  const heat = p[7];
  const chev = p[0] ? `<svg width="8" height="11" viewBox="0 0 8 11"><path d="M1.500 1l4.500 4.500-4.500 4.500" fill="none" stroke="#a0a0a0" stroke-width="2"/></svg>` : "";
  const cells = p.slice(3, 7).map((c, i) => `<span class="cell c${heat[i]}">${c}</span>`).join("");
  return `<div class="proc"><div class="chev">${chev}</div><div class="proc-icon"><svg width="20" height="20"><use href="#i-${p[1]}"/></svg></div><span class="proc-name">${p[2]}</span>${cells}<span class="sliver${heat[4] === "1" ? " on" : ""}"></span></div>`;
}).join("");
```
